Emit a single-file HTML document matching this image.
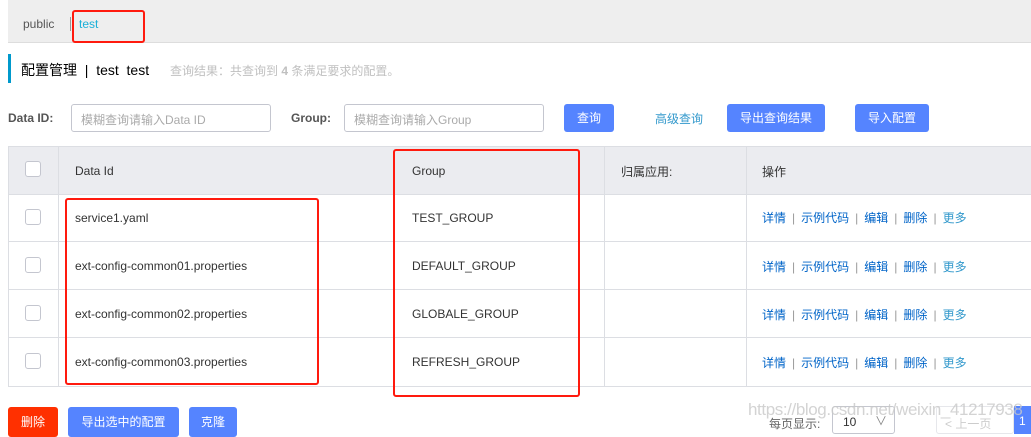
<!DOCTYPE html>
<html><head><meta charset="utf-8">
<style>
*{box-sizing:border-box;margin:0;padding:0}
body{width:1031px;height:429px;overflow:hidden;background:#fff;font-family:"Liberation Sans","Noto Sans CJK SC",sans-serif;font-size:12px;color:#333;position:relative}
.abs{position:absolute;white-space:nowrap}
.btn{position:absolute;background:#5584ff;color:#fff;border-radius:3px;text-align:center;font-size:12px}
.red{position:absolute;border:2px solid #ff1a0e;border-radius:3px}
.cb{position:absolute;left:25px;width:16px;height:16px;border:1px solid #c4c6cf;border-radius:3px;background:#fff}
.hl{position:absolute;left:8px;width:1023px;height:1px;background:#dcdee3}
.vl{position:absolute;width:1px;background:#dcdee3}
.ops{position:absolute;left:762px;color:#0064c8;font-size:12px;line-height:14px}
.ops span.s{color:#999;margin:0 6px}
.ops span.m{color:#39c}
</style></head><body>
<div class="abs" style="left:8px;top:0;width:1023px;height:43px;background:#eee;border-bottom:1px solid #ddd"></div>
<div class="abs" style="left:23px;top:17px;color:#555">public</div>
<div class="abs" style="left:70px;top:17px;width:1px;height:14px;background:#999"></div>
<div class="abs" style="left:79px;top:17px;color:#1ab0d8">test</div>
<div class="red" style="left:72px;top:10px;width:73px;height:33px"></div>

<div class="abs" style="left:8px;top:54px;width:3px;height:29px;background:#09c"></div>
<div class="abs" style="left:21px;top:60px;font-size:14px;color:#000">配置管理 &nbsp;| &nbsp;test &nbsp;test</div>
<div class="abs" style="left:170px;top:62px;font-size:12px;color:#c0c0c0">查询结果：共查询到 <b>4</b> 条满足要求的配置。</div>

<div class="abs" style="left:8px;top:111px;font-weight:bold;color:#555;font-size:12px">Data ID:</div>
<div class="abs" style="left:71px;top:104px;width:200px;height:28px;border:1px solid #c4c6cf;border-radius:3px;padding:6px 9px;color:#aaa">模糊查询请输入Data ID</div>
<div class="abs" style="left:291px;top:111px;font-weight:bold;color:#555">Group:</div>
<div class="abs" style="left:344px;top:104px;width:200px;height:28px;border:1px solid #c4c6cf;border-radius:3px;padding:6px 9px;color:#aaa">模糊查询请输入Group</div>
<div class="btn" style="left:564px;top:104px;width:50px;height:28px;line-height:28px">查询</div>
<div class="abs" style="left:655px;top:110px;color:#39c">高级查询</div>
<div class="btn" style="left:727px;top:104px;width:98px;height:28px;line-height:28px">导出查询结果</div>
<div class="btn" style="left:855px;top:104px;width:74px;height:28px;line-height:28px">导入配置</div>

<div class="abs" style="left:8px;top:146px;width:1023px;height:48px;background:#ebecf0"></div>
<div class="hl" style="top:146px"></div>
<div class="hl" style="top:194px"></div>
<div class="hl" style="top:241px"></div>
<div class="hl" style="top:289px"></div>
<div class="hl" style="top:337px"></div>
<div class="hl" style="top:386px"></div>
<div class="vl" style="left:8px;top:146px;height:240px"></div>
<div class="vl" style="left:58px;top:146px;height:240px"></div>
<div class="vl" style="left:604px;top:146px;height:240px"></div>
<div class="vl" style="left:746px;top:146px;height:240px"></div>

<div class="cb" style="top:161px"></div>
<div class="abs" style="left:75px;top:164px">Data Id</div>
<div class="abs" style="left:412px;top:164px">Group</div>
<div class="abs" style="left:621px;top:163px">归属应用:</div>
<div class="abs" style="left:762px;top:163px">操作</div>

<div class="cb" style="top:209px"></div>
<div class="cb" style="top:257px"></div>
<div class="cb" style="top:305px"></div>
<div class="cb" style="top:353px"></div>

<div class="abs" style="left:75px;top:211px">service1.yaml</div>
<div class="abs" style="left:75px;top:259px">ext-config-common01.properties</div>
<div class="abs" style="left:75px;top:307px">ext-config-common02.properties</div>
<div class="abs" style="left:75px;top:355px">ext-config-common03.properties</div>
<div class="abs" style="left:412px;top:211px">TEST_GROUP</div>
<div class="abs" style="left:412px;top:259px">DEFAULT_GROUP</div>
<div class="abs" style="left:412px;top:307px">GLOBALE_GROUP</div>
<div class="abs" style="left:412px;top:355px">REFRESH_GROUP</div>

<div class="ops abs" style="top:211px">详情<span class="s">|</span>示例代码<span class="s">|</span>编辑<span class="s">|</span>删除<span class="s">|</span><span class="m">更多</span></div>
<div class="ops abs" style="top:260px">详情<span class="s">|</span>示例代码<span class="s">|</span>编辑<span class="s">|</span>删除<span class="s">|</span><span class="m">更多</span></div>
<div class="ops abs" style="top:308px">详情<span class="s">|</span>示例代码<span class="s">|</span>编辑<span class="s">|</span>删除<span class="s">|</span><span class="m">更多</span></div>
<div class="ops abs" style="top:356px">详情<span class="s">|</span>示例代码<span class="s">|</span>编辑<span class="s">|</span>删除<span class="s">|</span><span class="m">更多</span></div>

<div class="red" style="left:65px;top:198px;width:254px;height:187px"></div>
<div class="red" style="left:393px;top:149px;width:187px;height:248px"></div>

<div class="btn" style="left:8px;top:407px;width:50px;height:30px;line-height:30px;background:#ff3000">删除</div>
<div class="btn" style="left:68px;top:407px;width:111px;height:30px;line-height:30px">导出选中的配置</div>
<div class="btn" style="left:189px;top:407px;width:48px;height:30px;line-height:30px">克隆</div>

<div class="abs" style="left:769px;top:415px;color:#666">每页显示:</div>
<div class="abs" style="left:832px;top:406px;width:63px;height:28px;border:1px solid #c4c6cf;border-radius:3px;padding:8px 10px;color:#333">10<span style="position:absolute;left:42px;top:5px;color:#888">∨</span></div>
<div class="abs" style="left:936px;top:406px;width:78px;height:28px;border:1px solid #e6e7eb;border-radius:3px;padding:8px 8px;color:#ccc">&lt; 上一页</div>
<div class="abs" style="left:1014px;top:406px;width:20px;height:28px;background:#5584ff;color:#fff;padding:8px 5px">1</div>
<div class="abs" style="left:748px;top:400px;font-size:17px;letter-spacing:-0.4px;color:rgba(200,200,200,0.8)">https://blog.csdn.net/weixin_41217938</div>
</body></html>
